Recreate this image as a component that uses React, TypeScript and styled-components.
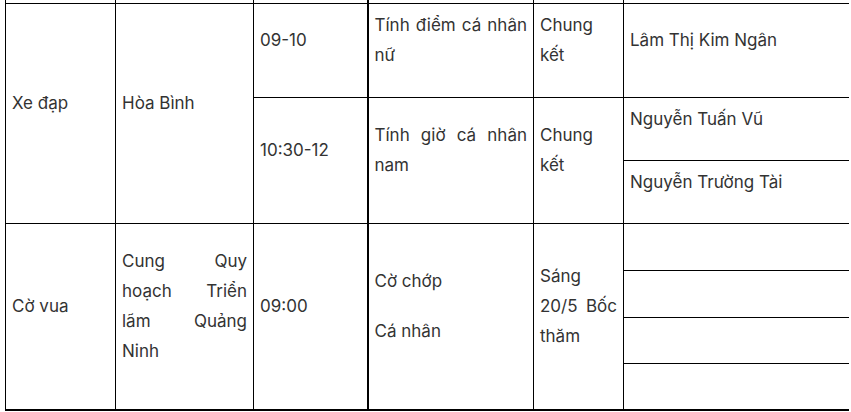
import React from 'react';
import styled, { createGlobalStyle } from 'styled-components';

const GlobalStyle = createGlobalStyle`
  html, body {
    margin: 0;
    padding: 0;
    background: #fff;
  }
  body {
    font-family: Inter, "Noto Sans", "Liberation Sans", sans-serif;
    color: #333;
  }
`;

const Page = styled.div`
  padding-left: 5px;
  width: 844px;
  height: 412px;
  overflow: hidden;
`;

const Table = styled.table`
  width: 844px;
  table-layout: fixed;
  border-collapse: collapse;
  font-size: 17px;
  line-height: 30px;
`;

const Row = styled.tr<{ $h: number }>`
  height: ${p => p.$h}px;
`;

const Cell = styled.td<{ $thick?: boolean; $open?: boolean; $bottom?: boolean }>`
  border: 1px solid #000;
  border-left-width: ${p => (p.$thick ? 2 : 1)}px;
  border-top: ${p => (p.$open ? 'none' : '1px solid #000')};
  border-bottom-width: ${p => (p.$bottom ? 2 : 1)}px;
  padding: ${p => (p.$open ? '0 6px' : '6px 6px')};
  vertical-align: middle;
  text-align: justify;
`;

const Para = styled.p`
  margin: 0 0 20px;
`;

const widths = [110, 138, 114, 166, 90, 226];

const App: React.FC = () => {
  return (
    <Page>
      <GlobalStyle />
      <Table>
        <colgroup>
          {widths.map((w, i) => (
            <col key={i} style={{ width: w }} />
          ))}
        </colgroup>
        <tbody>
          <Row $h={3}>
            <Cell $open />
            <Cell $open />
            <Cell $open />
            <Cell $open $thick />
            <Cell $open />
            <Cell $open />
          </Row>
          <Row $h={94}>
            <Cell rowSpan={3}><Para>Xe đạp</Para></Cell>
            <Cell rowSpan={3}><Para>Hòa Bình</Para></Cell>
            <Cell><Para>09-10</Para></Cell>
            <Cell $thick><Para>Tính điểm cá nhân nữ</Para></Cell>
            <Cell><Para>Chung kết</Para></Cell>
            <Cell><Para>Lâm Thị Kim Ngân</Para></Cell>
          </Row>
          <Row $h={63}>
            <Cell rowSpan={2}><Para>10:30-12</Para></Cell>
            <Cell rowSpan={2} $thick><Para>Tính giờ cá nhân nam</Para></Cell>
            <Cell rowSpan={2}><Para>Chung kết</Para></Cell>
            <Cell><Para>Nguyễn Tuấn Vũ</Para></Cell>
          </Row>
          <Row $h={63}>
            <Cell><Para>Nguyễn Trường Tài</Para></Cell>
          </Row>
          <Row $h={47}>
            <Cell rowSpan={4} $bottom><Para>Cờ vua</Para></Cell>
            <Cell rowSpan={4} $bottom><Para>Cung Quy hoạch Triển lãm Quảng Ninh</Para></Cell>
            <Cell rowSpan={4} $bottom><Para>09:00</Para></Cell>
            <Cell rowSpan={4} $bottom $thick>
              <Para>Cờ chớp</Para>
              <Para>Cá nhân</Para>
            </Cell>
            <Cell rowSpan={4} $bottom><Para>Sáng 20/5 Bốc thăm</Para></Cell>
            <Cell />
          </Row>
          <Row $h={47}>
            <Cell />
          </Row>
          <Row $h={46}>
            <Cell />
          </Row>
          <Row $h={47}>
            <Cell $bottom />
          </Row>
        </tbody>
      </Table>
    </Page>
  );
};

export default App;
